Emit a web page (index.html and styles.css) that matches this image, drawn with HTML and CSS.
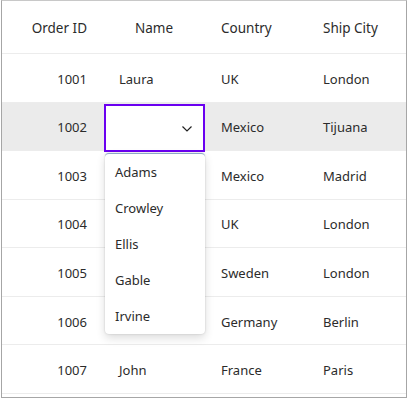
FILE: index.html
```
<!DOCTYPE html>
<html>
<head>
<meta charset="utf-8">
<link rel="stylesheet" href="styles.css">
</head>
<body>
<div class="frame">
  <div class="grid">
    <div class="row head">
      <div class="cell num">Order ID</div>
      <div class="cell center">Name</div>
      <div class="cell">Country</div>
      <div class="cell">Ship City</div>
    </div>
    <div class="row"><div class="cell num">1001</div><div class="cell">Laura</div><div class="cell">UK</div><div class="cell">London</div></div>
    <div class="row sel"><div class="cell num">1002</div><div class="cell edit"><div class="combo"><svg class="chev" width="10" height="6" viewBox="0 0 10 6"><path d="M0.5 0.5 L5 5 L9.5 0.5" fill="none" stroke="#222" stroke-width="1.2"/></svg></div>
      <div class="popup">
        <div class="item">Adams</div>
        <div class="item">Crowley</div>
        <div class="item">Ellis</div>
        <div class="item">Gable</div>
        <div class="item">Irvine</div>
      </div>
    </div><div class="cell">Mexico</div><div class="cell">Tijuana</div></div>
    <div class="row"><div class="cell num">1003</div><div class="cell"></div><div class="cell">Mexico</div><div class="cell">Madrid</div></div>
    <div class="row"><div class="cell num">1004</div><div class="cell"></div><div class="cell">UK</div><div class="cell">London</div></div>
    <div class="row"><div class="cell num">1005</div><div class="cell"></div><div class="cell">Sweden</div><div class="cell">London</div></div>
    <div class="row"><div class="cell num">1006</div><div class="cell"></div><div class="cell">Germany</div><div class="cell">Berlin</div></div>
    <div class="row"><div class="cell num">1007</div><div class="cell">John</div><div class="cell">France</div><div class="cell">Paris</div></div>
  </div>
</div>
</body>
</html>
```
FILE: styles.css
```
html, body {
  margin: 0;
  padding: 0;
  background: #fff;
}
body {
  font-family: "Noto Sans", "Open Sans", sans-serif;
  font-size: 13px;
  color: #2b2b2b;
}
.frame {
  margin-left: 1px;
  width: 404px;
  height: 396px;
  border: 1px solid #a6a6a6;
  border-top-color: #c8c8c8;
  overflow: hidden;
}
.grid {
  display: flex;
  flex-direction: column;
}
.row {
  display: grid;
  grid-template-columns: 101px 102px 102px 99px;
  height: 48.57px;
  border-bottom: 1px solid #ececec;
  box-sizing: border-box;
}
.row.head {
  height: 53px;
  font-size: 13.5px;
}
.row.sel {
  background: #ebebeb;
}
.cell {
  display: flex;
  align-items: center;
  padding: 2px 16px 0;
  position: relative;
}
.cell.num {
  justify-content: flex-end;
}
.cell.center {
  justify-content: center;
}
.cell.edit {
  padding: 0;
}
.combo {
  position: absolute;
  left: 1px;
  top: 1px;
  width: 101px;
  height: 48px;
  box-sizing: border-box;
  border: 2px solid #6a00f0;
  background: #fff;
}
.chev {
  position: absolute;
  right: 11px;
  top: 20px;
}
.popup {
  position: absolute;
  left: 2px;
  top: 50px;
  width: 100px;
  background: #fff;
  border-radius: 4px;
  box-shadow: 0 4px 10px rgba(0,0,0,0.14), 0 0 2px rgba(0,0,0,0.18);
  border-top: 1px solid #8aa8c8;
  z-index: 10;
}
.item {
  height: 36px;
  display: flex;
  align-items: center;
  padding-left: 10px;
}
```
